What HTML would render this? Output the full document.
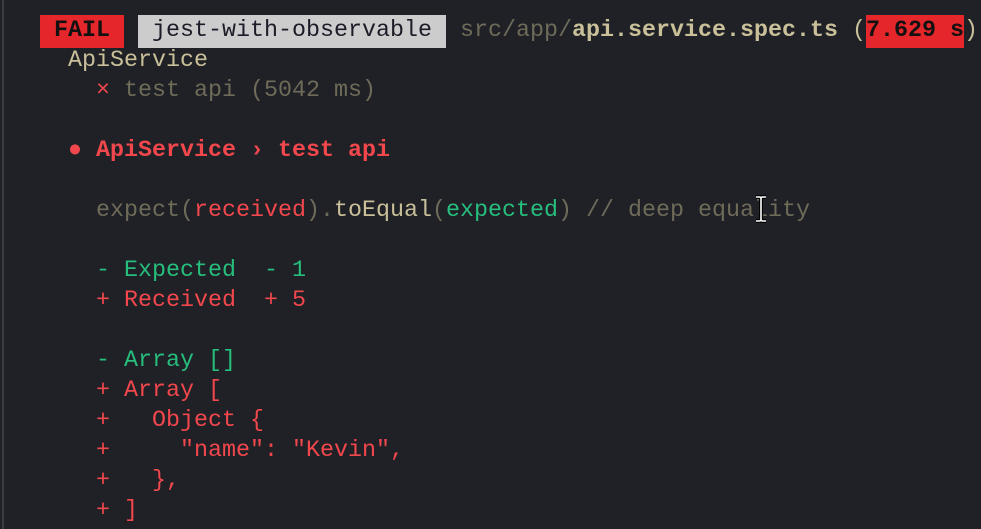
<!DOCTYPE html>
<html><head><meta charset="utf-8"><style>
html,body{margin:0;padding:0;background:#1f2126;width:981px;height:529px;overflow:hidden;position:relative}
.bar{position:absolute;left:2px;top:0;width:2px;height:529px;background:#3a3c42}
pre{position:absolute;left:40px;top:16px;margin:0;font-family:"Liberation Mono","DejaVu Sans Mono",monospace;font-size:23.33px;line-height:30px;color:#c9c09a;white-space:pre}
.fail{background:#e5262b;color:#111;font-weight:bold;padding:3px 0 4px}
.proj{background:#cccccc;color:#1c1c28;padding:3px 0 4px}
.g{color:#6f6b59}
.b{font-weight:bold}
.t{background:#e5262b;color:#111;font-weight:bold;padding:3px 0 4px}
.r{color:#f2474c}
.gr{color:#27bd7c}
.cur{position:absolute;left:753px;top:195px}
</style></head><body>
<div class="bar"></div>
<pre><span class="fail"> FAIL </span> <span class="proj"> jest-with-observable </span> <span class="g">src/app/</span><span class="b">api.service.spec.ts</span> (<span class="t">7.629 s</span>)
  ApiService
    <span class="r">×</span> <span class="g">test api (5042 ms)</span>

<span class="r b">  ● ApiService › test api</span>

    <span class="g">expect(</span><span class="r">received</span><span class="g">).</span>toEqual<span class="g">(</span><span class="gr">expected</span><span class="g">) // deep equality</span>

    <span class="gr">- Expected  - 1</span>
    <span class="r">+ Received  + 5</span>

    <span class="gr">- Array []</span>
    <span class="r">+ Array [</span>
    <span class="r">+   Object {</span>
    <span class="r">+     "name": "Kevin",</span>
    <span class="r">+   },</span>
    <span class="r">+ ]</span></pre>
<svg class="cur" width="16" height="28" viewBox="0 0 16 28"><path d="M3 2h4l1 1 1-1h4M8 3v22M3 26h4l1-1 1 1h4" stroke="#000" stroke-width="4" fill="none"/><path d="M3 2h4l1 1 1-1h4M8 3v22M3 26h4l1-1 1 1h4" stroke="#fff" stroke-width="1.6" fill="none"/></svg>
</body></html>
